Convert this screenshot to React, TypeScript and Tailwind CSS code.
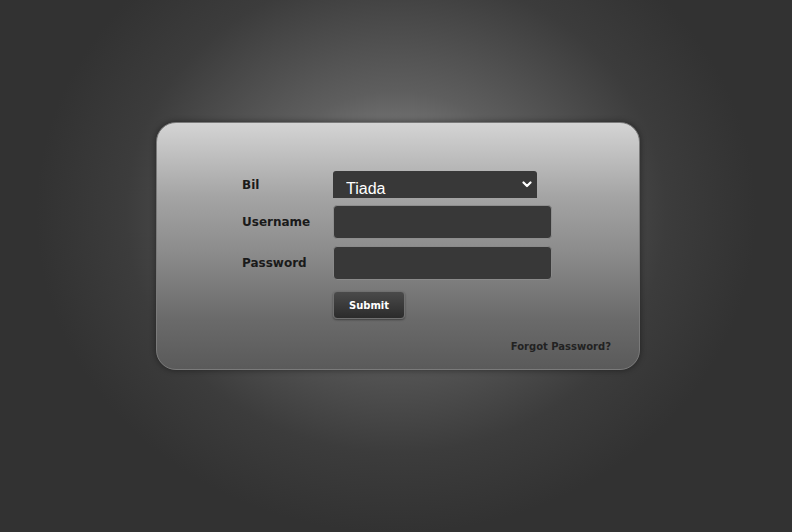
import { useState } from "react";

export default function App() {
  const [bil, setBil] = useState("Tiada");

  return (
    <div className="min-h-screen w-full pt-[122px] pl-[156px] bg-[radial-gradient(ellipse_360px_320px_at_50%_40%,#9c9c9c_0%,#5e5e5e_38%,#3c3c3c_75%,#323232_100%)] font-['DejaVu_Sans',sans-serif]">
      <div className="w-[484px] h-[248px] rounded-[20px] border border-[#7a7a7a] bg-[linear-gradient(#d4d4d4_0%,#a4a4a4_30%,#8c8c8c_52%,#6a6a6a_80%,#5a5a5a_100%)] shadow-[0_0_6px_rgba(0,0,0,0.45)] pt-[48px] pl-[85px] pr-[28px] flex flex-col">
        <div className="grid grid-cols-[91px_auto] items-center gap-y-[7px]">
          <label className="text-[12px] font-bold text-[#1a1a1a]">Bil</label>
          <div className="relative w-[204px] h-[27px]">
            <select
              value={bil}
              onChange={(e) => setBil(e.target.value)}
              className="appearance-none w-full h-full rounded-t-[3px] bg-[#383838] text-white text-[16px] pl-[13px] pt-[6px] outline-none font-['Liberation_Sans',Arial,sans-serif]"
            >
              <option>Tiada</option>
              <option>1</option>
              <option>2</option>
            </select>
            <svg className="absolute right-[5px] top-[10px] pointer-events-none" width="10" height="7" viewBox="0 0 10 7">
              <path d="M1.5 1.5 L5 5 L8.5 1.5" stroke="#fff" strokeWidth="2.2" fill="none" strokeLinecap="round" strokeLinejoin="round" />
            </svg>
          </div>

          <label className="text-[12px] font-bold text-[#1a1a1a]">Username</label>
          <input type="text" className="w-[219px] h-[34px] rounded-[4px] border border-[#8e8e8e] bg-[#383838] text-white px-2 outline-none" />

          <label className="text-[12px] font-bold text-[#1a1a1a]">Password</label>
          <input type="password" className="w-[219px] h-[34px] rounded-[4px] border border-[#8a8a8a] bg-[#383838] text-white px-2 outline-none" />

          <div />
          <button className="mt-[4px] w-[72px] h-[28px] rounded-[4px] border border-[#707070] bg-[linear-gradient(#4a4a4a,#2b2b2b)] text-white text-[10px] font-bold shadow-[0_1px_2px_rgba(0,0,0,0.4)]">
            Submit
          </button>
        </div>
        <div className="mt-[20px] pl-[2px] self-end text-[10px] font-bold text-[#222]">
          <a href="#">Forgot Password?</a>
        </div>
      </div>
    </div>
  );
}
